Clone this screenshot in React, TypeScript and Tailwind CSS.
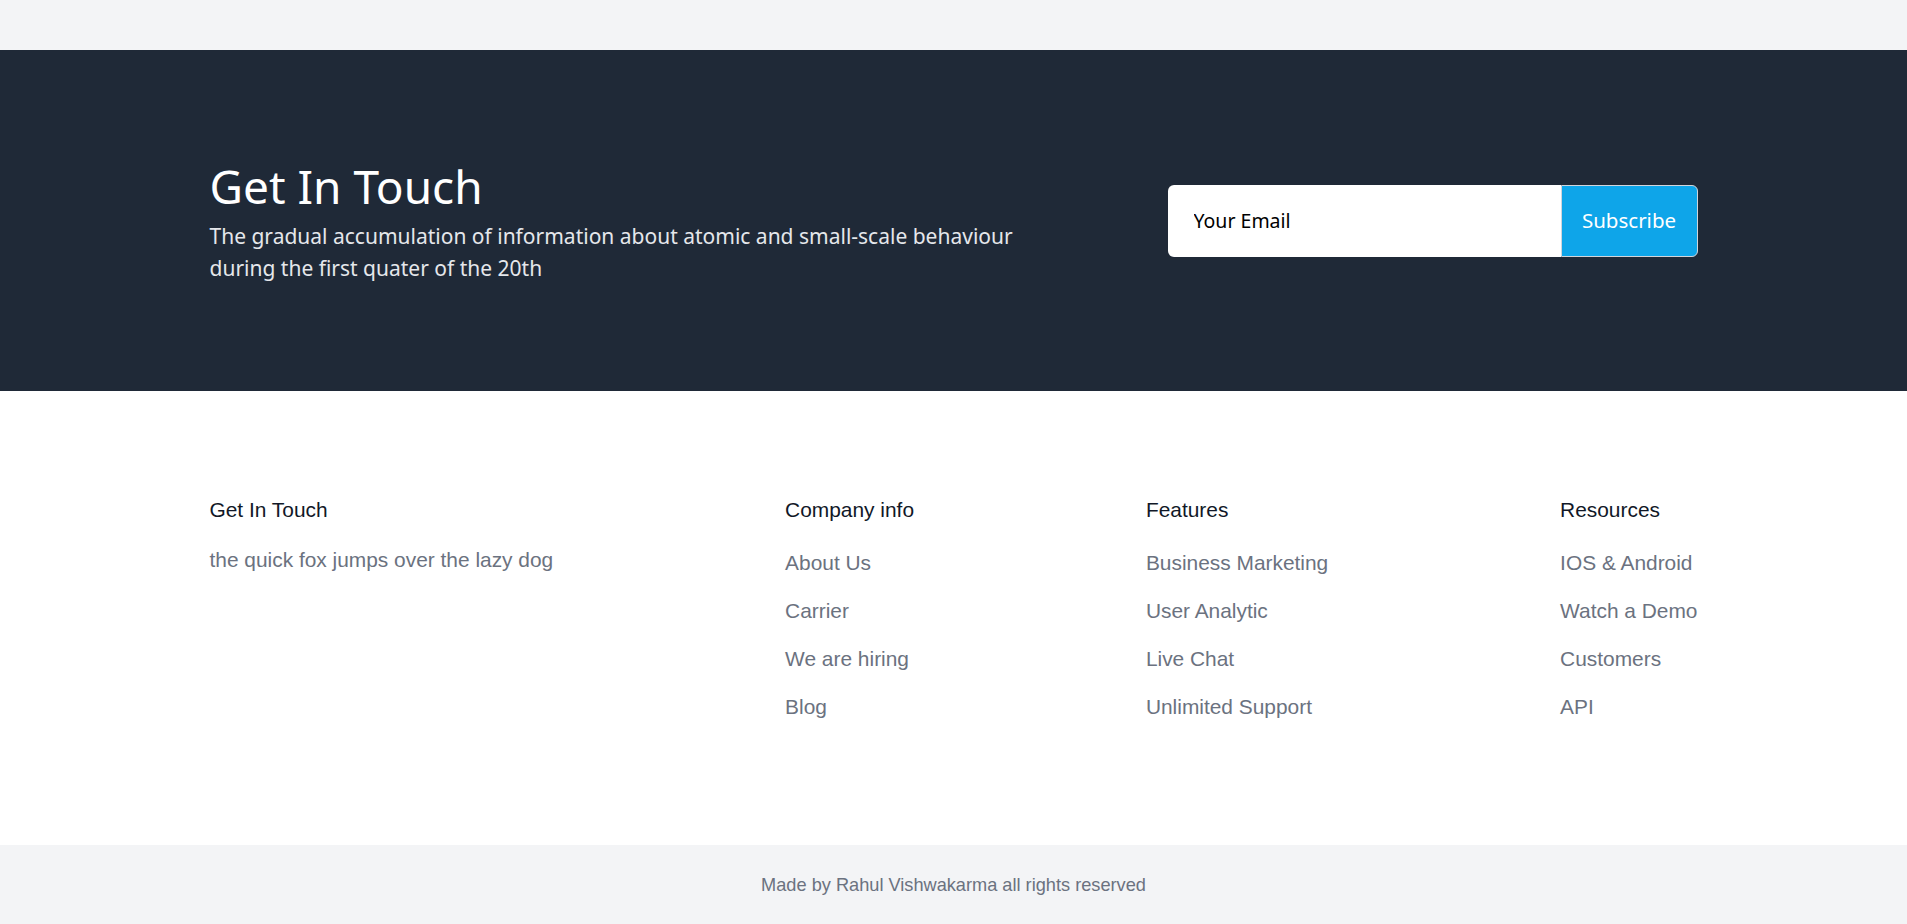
import React from "react";

const columns = [
  { title: "Company info", links: ["About Us", "Carrier", "We are hiring", "Blog"] },
  { title: "Features", links: ["Business Marketing", "User Analytic", "Live Chat", "Unlimited Support"] },
  { title: "Resources", links: ["IOS & Android", "Watch a Demo", "Customers", "API"] },
];

export default function App() {
  return (
    <div className="w-full min-h-[924px] bg-white">
      <div className="h-[50px] bg-[#f3f4f6]" />
      <section className="bg-[#1f2937] h-[341px] flex items-center">
        <div className="container mx-auto px-6 flex items-center justify-between font-['Noto_Sans',sans-serif]">
          <div className="max-w-[850px] pt-[5px]">
            <h2 className="text-[46px] leading-[48px] text-white">Get In Touch</h2>
            <p className="mt-[10px] text-[21px] leading-8 text-[#e5e7eb]">
              The gradual accumulation of information about atomic and small-scale behaviour during the first quater of the 20th
            </p>
          </div>
          <div className="flex w-[530px] h-[72px]">
            <input
              className="flex-1 min-w-0 bg-white rounded-l-md pl-[26px] pr-6 text-[19.5px] text-black placeholder:text-black outline-none"
              placeholder="Your Email"
            />
            <button className="w-[137px] bg-[#0ea5e9] text-white text-[20.5px] rounded-r-md border border-[#d1d5db]">
              Subscribe
            </button>
          </div>
        </div>
      </section>
      <section className="h-[454px] pt-[105px] font-['Liberation_Sans',Arial,sans-serif]">
        <div className="container mx-auto px-6 flex justify-between items-start">
          <div>
            <h5 className="text-[20.9px] leading-7 text-[#111827]">Get In Touch</h5>
            <p className="mt-[22px] text-[20.9px] leading-7 text-[#6b7280]">the quick fox jumps over the lazy dog</p>
          </div>
          {columns.map((c) => (
            <div key={c.title}>
              <h5 className="text-[20.9px] leading-7 text-[#111827]">{c.title}</h5>
              <ul className="mt-[25px] flex flex-col gap-5">
                {c.links.map((l) => (
                  <li key={l} className="text-[20.9px] leading-7 text-[#6b7280]">{l}</li>
                ))}
              </ul>
            </div>
          ))}
        </div>
      </section>
      <div className="h-[79px] bg-[#f3f4f6] pt-[26px] text-center font-['Liberation_Sans',Arial,sans-serif] text-[18.2px] leading-7 text-[#6b7280]">
        Made by Rahul Vishwakarma all rights reserved
      </div>
    </div>
  );
}
